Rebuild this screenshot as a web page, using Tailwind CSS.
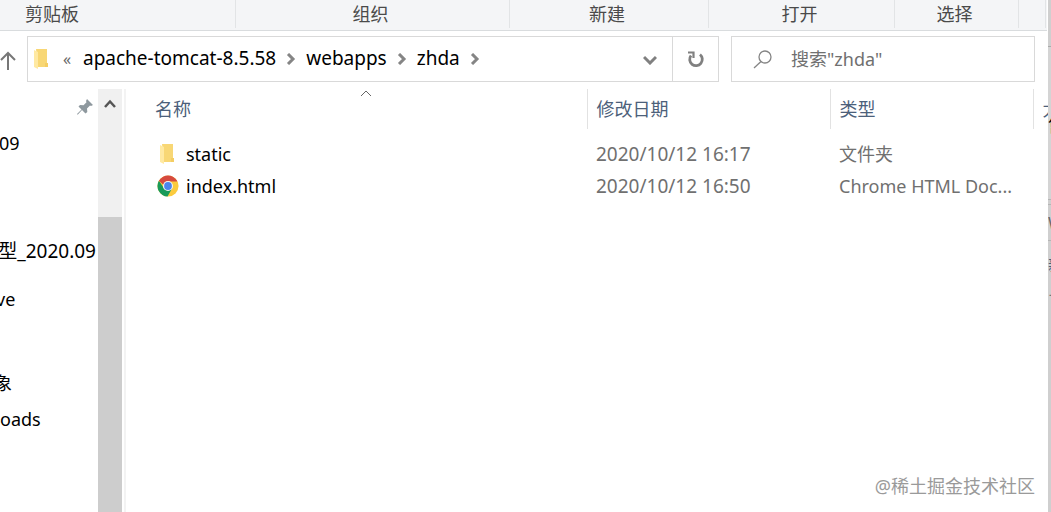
<!DOCTYPE html>
<html lang="zh-CN">
<head>
<meta charset="utf-8">
<meta name="viewport" content="width=device-width, initial-scale=1">
<title>zhda</title>
<script src="https://cdn.jsdelivr.net/npm/@tailwindcss/browser@4"></script>
</head>
<body class="flex h-screen overflow-hidden bg-white font-['Noto_Sans','Noto_Sans_CJK_SC',sans-serif] text-lg leading-8 text-black">
<div class="flex min-w-0 flex-1 flex-col">
  <header class="mr-px grid h-[31px] shrink-0 grid-cols-[236fr_274fr_199fr_186fr_124fr_27fr_1fr] border-b border-[#d9dcde] bg-[#f4f5f7] pb-[3px] text-center leading-7 text-[#4a4a4a]">
    <div class="border-r border-[#e2e4e6] pl-[25px] text-left">剪贴板</div>
    <div class="border-r border-[#e2e4e6] pr-1">组织</div>
    <div class="border-r border-[#e2e4e6] pr-1">新建</div>
    <div class="border-r border-[#e2e4e6] pr-1">打开</div>
    <div class="border-r border-[#e2e4e6] pr-1">选择</div>
    <div class="border-r border-[#e2e4e6]"></div>
  </header>

  <div class="mt-[5px] mr-[13px] flex h-[46px] shrink-0 items-stretch">
    <button aria-label="上移" class="flex w-[27px] shrink-0 items-center pt-[3px]">
      <svg class="h-5 w-4" viewBox="0 0 16 20" fill="none" stroke="#777" stroke-width="2"><path d="M8 19V2M1 9l7-7 7 7"/></svg>
    </button>
    <nav aria-label="地址" class="flex min-w-0 flex-1 items-center border border-[#d9d9d9] pl-1.5">
      <svg class="mr-3.5 h-5 w-[15px] shrink-0" viewBox="0 0 15 20"><path d="M2 0h11v16l1 0v2H4z" fill="#f8d775"/><path d="M0 1l4 2v17l-4-2z" fill="#ffe9a2"/><path d="M11 14h3v4h-3z" fill="#f4cd63"/></svg>
      <span class="mr-2.5 w-2.5 text-base leading-8 text-[#666]">«</span>
      <a href="#" class="mt-[-2px] text-[19px]">apache-tomcat-8.5.58</a>
      <svg class="mx-2.5 h-3 w-2.5 shrink-0" viewBox="0 0 10 12" fill="none" stroke="#858585" stroke-width="3"><path d="M2 1l5 5-5 5"/></svg>
      <a href="#" class="mt-[-2px] text-[19px]">webapps</a>
      <svg class="mx-2.5 h-3 w-2.5 shrink-0" viewBox="0 0 10 12" fill="none" stroke="#858585" stroke-width="3"><path d="M2 1l5 5-5 5"/></svg>
      <a href="#" class="mt-[-2px] text-[19px]">zhda</a>
      <svg class="mx-2.5 h-3 w-2.5 shrink-0" viewBox="0 0 10 12" fill="none" stroke="#858585" stroke-width="3"><path d="M2 1l5 5-5 5"/></svg>
      <button aria-label="历史记录" class="mr-[15px] ml-auto pt-0.5">
        <svg class="h-2.5 w-3.5" viewBox="0 0 14 10" fill="none" stroke="#808080" stroke-width="3"><path d="M1 2l6 6 6-6"/></svg>
      </button>
      <button aria-label="刷新" class="flex h-full w-[46px] items-center justify-center border-l border-[#d9d9d9]">
        <svg class="h-[18px] w-[18px]" viewBox="0 0 18 18" fill="none" stroke="#808080" stroke-width="2.800"><path d="M13 4.500A6.300 6.300 0 1 1 4 5.500"/><path d="M1 2.500H6.500V8" stroke-width="2.200"/></svg>
      </button>
    </nav>
    <label class="ml-3 flex w-[304px] shrink-0 items-center border border-[#d9d9d9] pl-[21px]">
      <svg class="mr-[19px] h-[19px] w-[19px] shrink-0" viewBox="0 0 19 19" fill="none" stroke="#858585" stroke-width="1.300"><circle cx="12" cy="7" r="6"/><path d="M8 11.500L1 18"/></svg>
      <input type="text" aria-label="搜索" placeholder='搜索"zhda"' class="w-full min-w-0 outline-none placeholder:text-[#707070]">
    </label>
  </div>

  <main class="mt-[7px] flex min-h-0 flex-1">
    <aside class="flex w-[98px] shrink-0 flex-col overflow-hidden whitespace-nowrap">
      <svg class="mt-2.5 mr-[5px] h-4 w-4 shrink-0 self-end" viewBox="0 0 16 16" fill="#8e989e"><path d="M10 0l6 6-2 1-1-.5-3 3 .3 3.500-1.800 1.500L5 11l-4.300 4.700L0 15l4.500-4.500L1.500 7.500 3 6l3.500.2 3-3L9 2z"/></svg>
      <a href="#" class="mt-3 -ml-px">09</a>
      <a href="#" class="mt-[76px] self-end pr-0.5 text-[19px]">型_2020.09</a>
      <a href="#" class="mt-4 -ml-1">ve</a>
      <a href="#" class="mt-[52px] -ml-1.5">象</a>
      <a href="#" class="mt-1">oads</a>
    </aside>
    <div class="flex w-6 shrink-0 flex-col bg-[#f0f0f0]">
      <button aria-label="向上滚动" class="flex h-32 justify-center pt-2.5">
        <svg class="h-2.5 w-3" viewBox="0 0 12 10" fill="none" stroke="#555" stroke-width="2.500"><path d="M1 8l5-5.500L11 8"/></svg>
      </button>
      <div class="flex-1 bg-[#cdcdcd]"></div>
    </div>
    <div class="ml-0.5 w-0.5 shrink-0 bg-[#f3f3f3]"></div>
    <section class="relative min-w-0 flex-1 overflow-hidden">
      <table class="w-full table-fixed border-collapse text-left whitespace-nowrap">
        <colgroup><col><col class="w-[243px]"><col class="w-[203px]"><col class="w-[15px]"></colgroup>
        <thead>
          <tr class="h-10 text-[#4c607a]">
            <th class="relative border-r border-[#e2e2e2] pl-[29px] font-normal">名称
              <svg class="absolute top-0 left-1/2 h-2 w-3 translate-x-1" viewBox="0 0 12 8" fill="none" stroke="#666"><path d="M1 7l5-5 5 5"/></svg>
            </th>
            <th class="border-r border-[#e2e2e2] pl-[9px] font-normal">修改日期</th>
            <th class="border-r border-[#e2e2e2] pl-[9px] font-normal">类型</th>
            <th class="overflow-hidden pl-[9px] font-normal">大小</th>
          </tr>
        </thead>
        <tbody class="text-[#707070] before:block before:h-[9px] before:content-['']">
          <tr class="h-8">
            <td class="pl-[29px]"><a href="#" class="flex items-center text-black"><svg class="mr-1 ml-[5px] h-5 w-[15px]" viewBox="0 0 15 20"><path d="M2 0h11v16l1 0v2H4z" fill="#f8d775"/><path d="M0 1l4 2v17l-4-2z" fill="#ffe9a2"/><path d="M11 14h3v4h-3z" fill="#f4cd63"/></svg><span class="pl-[7px]">static</span></a></td>
            <td class="pl-[9px] text-[19px]">2020/10/12 16:17</td>
            <td class="pl-[9px]">文件夹</td>
            <td></td>
          </tr>
          <tr class="h-8">
            <td class="pl-[29px]"><a href="#" class="flex items-center text-black"><svg class="mr-px ml-0.5 h-[22px] w-[22px]" viewBox="0 0 48 48"><circle cx="24" cy="24" r="23" fill="#fbcb3e"/><path d="M24 24l-8.700 5L4.100 12.500A23 23 0 0 0 23 47l10-18z" fill="#189a59"/><path d="M4.100 12.500A23 23 0 0 1 43.900 12.500L44 14H24a10.500 10.500 0 0 0-10 7z" fill="#d64a3f"/><circle cx="24" cy="24" r="11" fill="#f3f3f3"/><circle cx="24" cy="24" r="8.500" fill="#4c86ec"/></svg><span class="pl-1.5">index.html</span></a></td>
            <td class="pl-[9px] text-[19px]">2020/10/12 16:50</td>
            <td class="pl-[9px]">Chrome HTML Doc...</td>
            <td></td>
          </tr>
        </tbody>
      </table>
      <p class="absolute right-[13px] bottom-3 text-lg text-[#9a9a9a]">@稀土掘金技术社区</p>
    </section>
  </main>
</div>
<div class="flex w-[3px] shrink-0 flex-col overflow-hidden bg-[#cfcfcf]">
  <div class="h-[47px] shrink-0 border-b border-[#aaa]"></div>
  <div class="h-[152px] shrink-0 bg-[#d4d4d4] pt-16 text-lg">售</div>
  <div class="h-1.5 shrink-0 border-y border-[#b5b5b5]"></div>
  <div class="h-9 shrink-0 border-b border-[#b5b5b5] text-base leading-9 text-[#666]">W</div>
  <div class="h-10 shrink-0 pt-1 text-base leading-10 text-[#4c607a]">新</div>
  <div class="shrink-0 text-base leading-10 text-[#777]">了</div>
</div>
</body>
</html>
